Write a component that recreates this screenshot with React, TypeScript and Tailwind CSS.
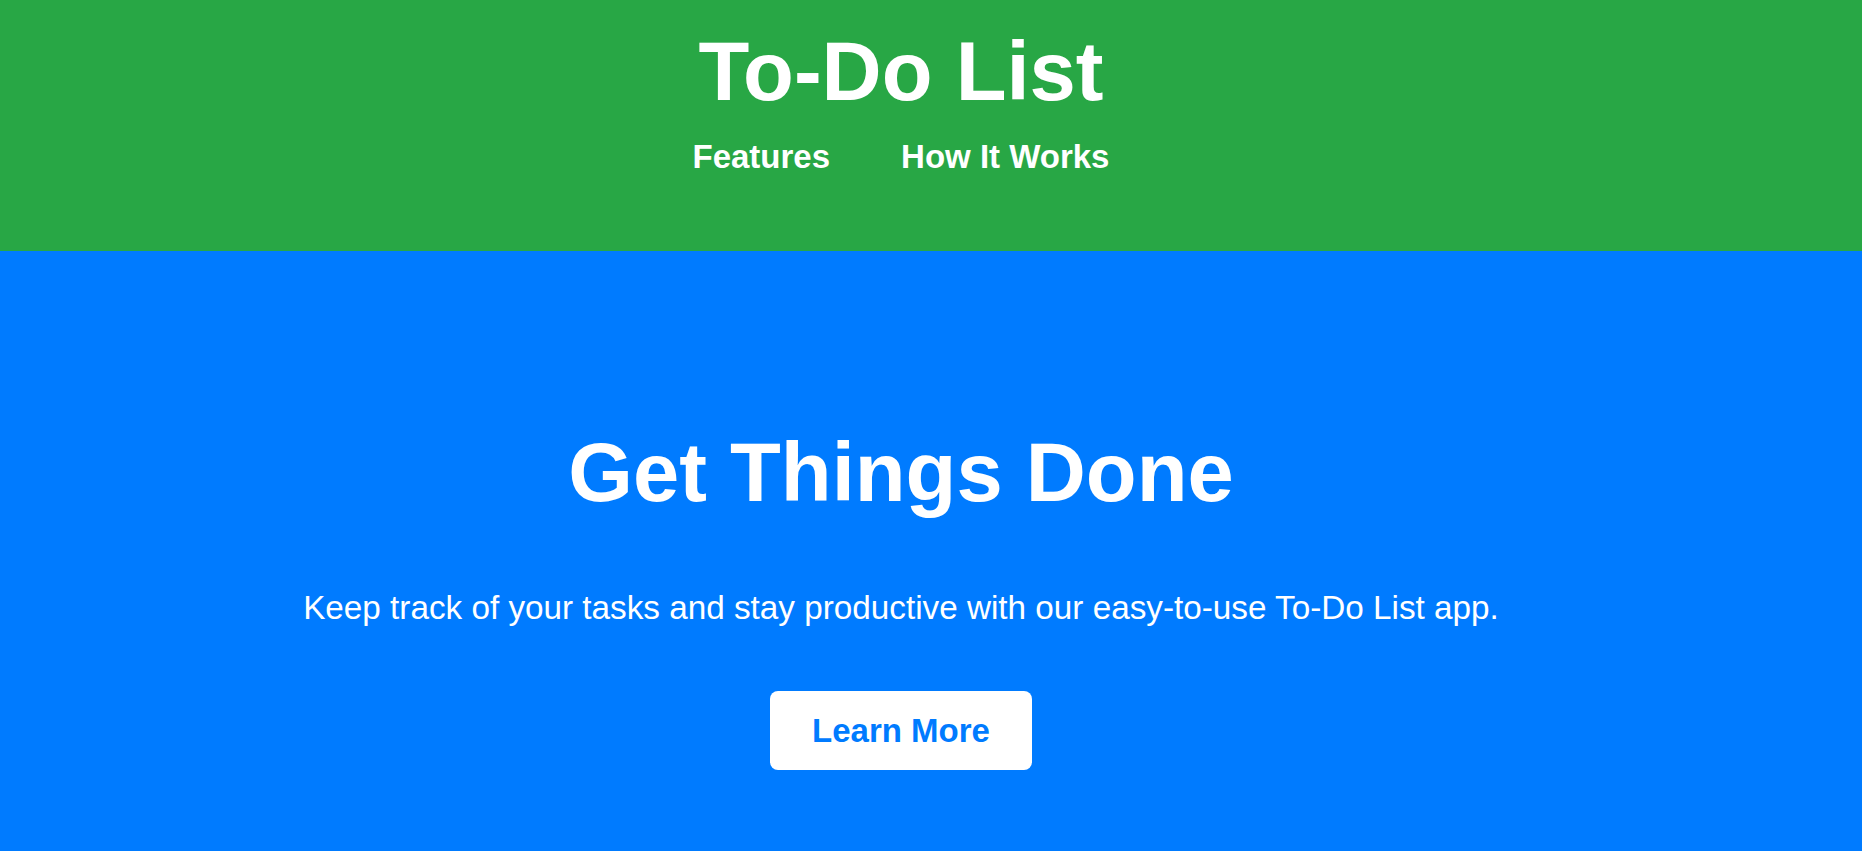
import React from "react";

export default function App() {
  return (
    <div
      className="w-full h-[851px] overflow-hidden flex flex-col"
      style={{ fontFamily: '"Liberation Sans", Arial, sans-serif' }}
    >
      <header className="bg-[#28a745] h-[251px] shrink-0 pt-[23.5px] pr-[60px] flex flex-col items-center text-white">
        <h1 className="text-[83.2px] font-bold leading-[1.15] m-0">To-Do List</h1>
        <nav className="mt-[19px] flex gap-[71px] text-[33px] font-bold leading-[1.15]">
          <a href="#features" className="text-white no-underline">Features</a>
          <a href="#how" className="text-white no-underline">How It Works</a>
        </nav>
      </header>
      <section className="bg-[#007bff] flex-1 pt-[173.5px] pr-[60px] flex flex-col items-center text-white">
        <h2 className="text-[83.2px] font-bold leading-[1.15] m-0">Get Things Done</h2>
        <p className="mt-[68.5px] text-[33.28px] leading-[1.15]">
          Keep track of your tasks and stay productive with our easy-to-use To-Do List app.
        </p>
        <button className="mt-[64.5px] bg-white text-[#007bff] text-[33px] font-bold leading-[1.15] px-[42px] py-[20.5px] rounded-[8px]">
          Learn More
        </button>
      </section>
    </div>
  );
}
